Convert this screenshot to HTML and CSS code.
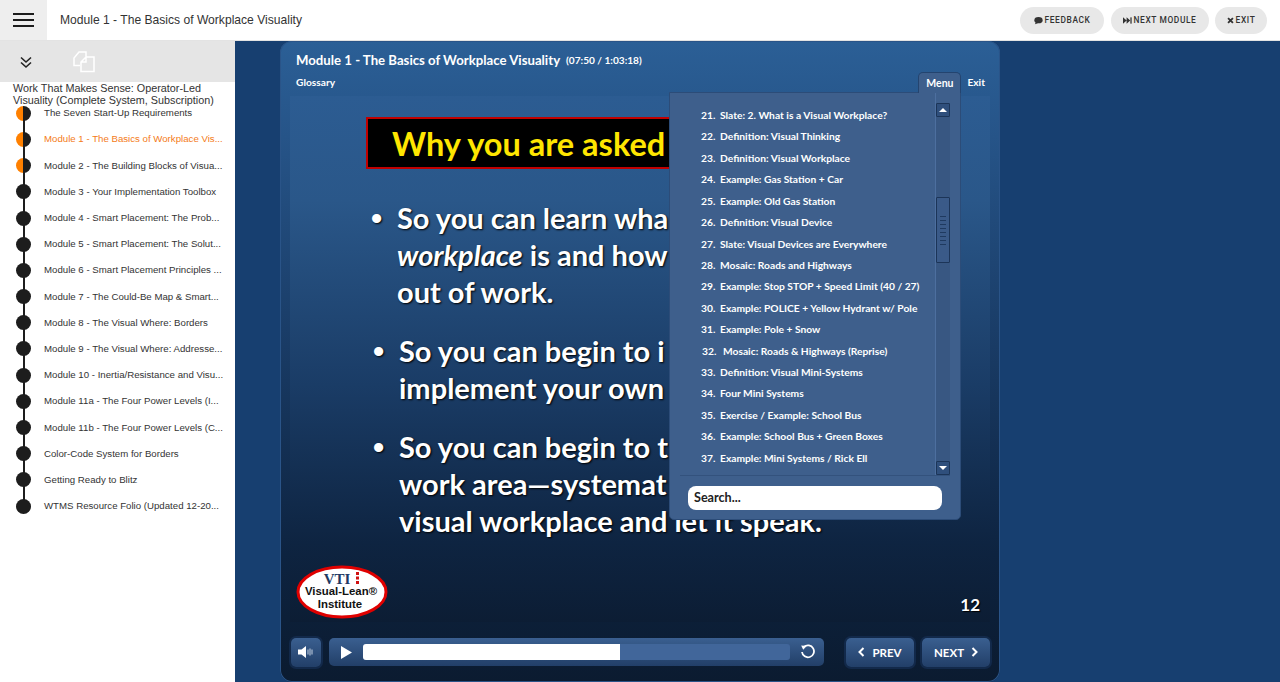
FILE: index.html
```html
<!DOCTYPE html>
<html lang="en">
<head>
<meta charset="utf-8">
<title>Module 1 - The Basics of Workplace Visuality</title>
<link rel="stylesheet" href="styles.css">
</head>
<body>
<header class="topbar">
  <button class="burger" aria-label="Menu"><span></span><span></span><span></span></button>
  <div class="page-title">Module 1 - The Basics of Workplace Visuality</div>
  <div class="top-actions">
    <a class="pill p-feedback"><svg class="pill-icon" viewBox="0 0 10 10"><ellipse cx="5" cy="4.600" rx="4.600" ry="3.500"/><path d="M2 7l-1 2.200L4.200 8z"/></svg>FEEDBACK</a>
    <a class="pill p-next"><svg class="pill-icon" viewBox="0 0 10 10"><path d="M0 1.500l4 3.500-4 3.500zM4 1.500l4 3.500-4 3.500z"/><rect x="8.200" y="1.500" width="1.400" height="7"/></svg>NEXT MODULE</a>
    <a class="pill p-exit"><svg class="pill-icon small" viewBox="0 0 10 10"><path d="M1.500 1.500l7 7M8.500 1.500l-7 7" stroke="#333" stroke-width="2.600" fill="none"/></svg>EXIT</a>
  </div>
</header>
<div class="shell">
  <aside class="sidebar">
    <div class="side-tools">
      <svg class="chev" viewBox="0 0 14 14"><path d="M2 2.500l5 4.500 5-4.500M2 7.500l5 4.500 5-4.500" fill="none" stroke="#222" stroke-width="1.600"/></svg>
      <svg class="copy" viewBox="0 0 22 22"><path d="M7 14.500H1V7l5-6h7v5M8 20.500V11l5-5h8v14.500zM13 6v5H8" fill="none" stroke="#fff" stroke-width="1.500"/></svg>
    </div>
    <h2 class="course">Work That Makes Sense: Operator-Led Visuality (Complete System, Subscription)</h2>
    <ol class="steps">
      <li class="step half">The Seven Start-Up Requirements</li>
      <li class="step half current">Module 1 - The Basics of Workplace Vis...</li>
      <li class="step half">Module 2 - The Building Blocks of Visua...</li>
      <li class="step">Module 3 - Your Implementation Toolbox</li>
      <li class="step">Module 4 - Smart Placement: The Prob...</li>
      <li class="step">Module 5 - Smart Placement: The Solut...</li>
      <li class="step">Module 6 - Smart Placement Principles ...</li>
      <li class="step">Module 7 - The Could-Be Map &amp; Smart...</li>
      <li class="step">Module 8 - The Visual Where: Borders</li>
      <li class="step">Module 9 - The Visual Where: Addresse...</li>
      <li class="step">Module 10 - Inertia/Resistance and Visu...</li>
      <li class="step">Module 11a - The Four Power Levels (I...</li>
      <li class="step">Module 11b - The Four Power Levels (C...</li>
      <li class="step">Color-Code System for Borders</li>
      <li class="step">Getting Ready to Blitz</li>
      <li class="step">WTMS Resource Folio (Updated 12-20...</li>
    </ol>
  </aside>
  <main class="stage">
    <section class="player">
      <div class="player-head">
        <span class="player-title">Module 1 - The Basics of Workplace Visuality</span>
        <span class="player-time">(07:50 / 1:03:18)</span>
      </div>
      <nav class="player-nav">
        <a class="nav-link">Glossary</a>
        <div class="nav-right">
          <a class="tab">Menu</a>
          <a class="nav-link">Exit</a>
        </div>
      </nav>
      <div class="slide">
        <div class="slide-title">Why you are asked</div>
        <ul class="bullets">
          <li>So you can learn wha<br><em>workplace</em> is and how<br>out of work.</li>
          <li class="b2">So you can begin to i<br>implement your own</li>
          <li class="b3">So you can begin to t<br>work area—systemat<br>visual workplace and let it speak.</li>
        </ul>
        <div class="slide-foot">
          <svg class="logo" viewBox="0 0 92 54">
            <ellipse cx="46" cy="27" rx="44" ry="25" fill="#fff" stroke="#e00000" stroke-width="3"/>
            <text x="41" y="19" class="logo-vti">VTI</text>
            <rect x="60" y="7" width="3" height="3" fill="#d01010"/>
            <rect x="60" y="11.500" width="3" height="3" fill="#d01010"/>
            <rect x="60" y="16" width="3" height="3" fill="#d01010"/>
            <text x="45" y="30" class="logo-t">Visual-Lean®</text>
            <text x="44" y="43" class="logo-t">Institute</text>
          </svg>
          <span class="slide-no">12</span>
        </div>
      </div>
      <div class="controls">
        <button class="ctl vol" aria-label="Volume">
          <svg viewBox="0 0 16 14" width="16" height="14"><path d="M0 4.500h3.500L8 1v12L3.500 9.500H0z" fill="#fff"/><path d="M10 4.500v5M12 3.500v7M14 4.500v5" stroke="#c4d0e0" stroke-width="1"/></svg>
        </button>
        <div class="seek">
          <svg class="play" viewBox="0 0 11 13"><path d="M0 0l11 6.500L0 13z" fill="#fff"/></svg>
          <div class="track"><div class="fill" style="width:60.200%"></div></div>
          <svg class="replay" viewBox="0 0 16 16"><path d="M4 2.800A6 6 0 1 1 2 8" fill="none" stroke="#fff" stroke-width="1.800"/><path d="M1.200 1.500l5.500.6-3.500 3.600z" fill="#fff"/></svg>
        </div>
        <button class="ctl pager prev"><svg viewBox="0 0 7 10" class="arrow"><path d="M5.500 1L1.500 5l4 4" fill="none" stroke="#fff" stroke-width="2"/></svg>PREV</button>
        <button class="ctl pager next">NEXT<svg viewBox="0 0 7 10" class="arrow"><path d="M1.500 1l4 4-4 4" fill="none" stroke="#fff" stroke-width="2"/></svg></button>
      </div>
      <div class="menu">
        <div class="menu-body">
          <ol class="menu-list">
            <li><span>21.</span>Slate: 2. What is a Visual Workplace?</li>
            <li><span>22.</span>Definition: Visual Thinking</li>
            <li><span>23.</span>Definition: Visual Workplace</li>
            <li><span>24.</span>Example: Gas Station + Car</li>
            <li><span>25.</span>Example: Old Gas Station</li>
            <li><span>26.</span>Definition: Visual Device</li>
            <li><span>27.</span>Slate: Visual Devices are Everywhere</li>
            <li><span>28.</span>Mosaic: Roads and Highways</li>
            <li><span>29.</span>Example: Stop STOP + Speed Limit (40 / 27)</li>
            <li><span>30.</span>Example: POLICE + Yellow Hydrant w/ Pole</li>
            <li><span>31.</span>Example: Pole + Snow</li>
            <li class="odd"><span>32.</span>Mosaic: Roads &amp; Highways (Reprise)</li>
            <li><span>33.</span>Definition: Visual Mini-Systems</li>
            <li><span>34.</span>Four Mini Systems</li>
            <li><span>35.</span>Exercise / Example: School Bus</li>
            <li><span>36.</span>Example: School Bus + Green Boxes</li>
            <li><span>37.</span>Example: Mini Systems / Rick Ell</li>
          </ol>
          <div class="scroll">
            <div class="sb-btn"><i class="up"></i></div>
            <div class="thumb"><b></b><b></b><b></b><b></b><b></b><b></b><b></b><b></b></div>
            <div class="sb-btn low"><i class="down"></i></div>
          </div>
        </div>
        <div class="search">Search...</div>
      </div>
    </section>
  </main>
</div>
</body>
</html>
```
FILE: styles.css
```css
* { box-sizing: border-box; }
html, body { margin: 0; height: 100%; overflow: hidden; }
body { font-family: "Liberation Sans", Arial, sans-serif; background: #fff; color: #333; }
button { border: 0; padding: 0; font: inherit; }

.topbar { height: 41px; display: flex; align-items: center; border-bottom: 1px solid #e3e3e3; background: #fff; }
.burger { width: 47px; height: 40px; background: #eeeeee; display: flex; flex-direction: column; justify-content: center; align-items: center; gap: 4px; }
.burger span { width: 21px; height: 2px; background: #1c1c1c; }
.page-title { margin-left: 13px; font-size: 12.100px; color: #333; flex: 1; }
.top-actions { display: flex; gap: 6.500px; padding-right: 13px; }
.pill { height: 27px; border-radius: 14px; background: #e8e8e8; display: flex; align-items: center; justify-content: center; font: 500 8.400px Roboto, sans-serif; letter-spacing: 0.600px; color: #333; }
.p-feedback { width: 84px; }
.p-next { width: 98px; }
.p-exit { width: 52px; }
.pill-icon { width: 9px; height: 9px; margin-right: 2px; fill: #333; }
.pill-icon.small { width: 7px; height: 7px; }

.shell { display: flex; height: 641px; }
.sidebar { width: 235px; background: #fff; flex: none; }
.side-tools { height: 41px; background: #e5e5e5; display: flex; align-items: center; padding-left: 19px; gap: 40px; }
.chev { width: 14px; height: 14px; }
.copy { width: 22px; height: 22px; }
.course { margin: 0; height: 18.300px; padding: 1px 13px 0; font-weight: 400; font-size: 10.800px; line-height: 11.500px; color: #333; }
.steps { list-style: none; margin: 0; padding: 0; }
.step { height: 26.200px; line-height: 26.200px; padding-left: 44px; font-size: 9.660px; white-space: nowrap; color: #333; position: relative; }
.step::before { content: ""; position: absolute; left: 16px; top: 5.500px; width: 15px; height: 15px; border-radius: 50%; background: #1d1d1d; z-index: 1; }
.half::before { background: linear-gradient(90deg, #ff8000 50%, #1d1d1d 50%); }
.step::after { content: ""; position: absolute; left: 22.500px; top: 0; width: 2px; height: 100%; background: #1d1d1d; }
.step:first-child::after { top: 50%; height: 50%; }
.step:last-child::after { height: 50%; }
.current { color: #f47b20; }

.stage { flex: 1; background: #173f70; padding-left: 45px; }
.player { width: 720px; height: 641px; position: relative; display: flex; flex-direction: column; border-radius: 12px; box-shadow: inset 0 0 0 1px #2a5488; background: linear-gradient(#2b5f96 0, #265488 15%, #1a3d68 45%, #0d2340 80%, #0b1b30 100%); padding: 0 10px; }
.player-head { height: 31px; padding: 7px 6px 0; display: flex; align-items: center; gap: 6px; color: #fff; font-family: Lato, sans-serif; flex: none; }
.player-title { font-weight: 700; font-size: 13.200px; }
.player-time { font-weight: 700; font-size: 10.100px; }
.player-nav { height: 19px; flex: none; display: flex; justify-content: space-between; align-items: center; padding: 0 5px 0 6px; }
.nav-link { font: 700 10.200px Lato, sans-serif; color: #fff; }
.nav-right { display: flex; align-items: center; gap: 6px; height: 19px; }
.tab { align-self: flex-start; width: 43px; height: 21px; background: #3e5f8c; border-radius: 5px 5px 0 0; color: #fff; font: 700 10.500px/20px Lato, sans-serif; text-align: center; border: 1px solid #24446f; border-bottom: 0; position: relative; z-index: 3; }

.slide { height: 526px; margin-top: 5px; flex: none; background: linear-gradient(#2c5c92 0, #2a5789 20%, #1a3c66 55%, #0e2441 85%, #0c1d34 100%); padding: 21px 0 0 76px; color: #fff; position: relative; }
.slide-title { width: 560px; height: 52px; background: #000; border: 2px solid #c00000; border-right: 0; padding-left: 24px; color: #ffe600; font: 700 32.500px/50px Lato, sans-serif; }
.bullets { list-style: none; margin: 30px 0 0; padding: 0 0 0 31px; font: 700 29px/37.200px Lato, sans-serif; white-space: nowrap; text-shadow: 1px 1px 2px #000; }
.bullets li { position: relative; margin-bottom: 21px; }
.bullets li::before { content: "•"; position: absolute; left: -26px; top: 1px; font: 700 32px/37.200px "Liberation Sans", sans-serif; }
.bullets .b2 { margin-left: 2px; margin-bottom: 22px; }
.bullets .b3 { margin-left: 2px; margin-bottom: 0; }
.slide-foot { position: absolute; left: 6px; right: 10px; bottom: 0; height: 60px; display: flex; justify-content: space-between; align-items: flex-end; padding-bottom: 3px; }
.logo { width: 92px; height: 54px; }
.logo-vti { font: 700 15px "Liberation Serif", serif; fill: #1f3a63; text-anchor: middle; }
.logo-t { font: 700 11.400px "Liberation Sans", sans-serif; fill: #111; text-anchor: middle; }
.slide-no { font: 700 17px Lato, sans-serif; text-shadow: 1px 1px 1px #000; margin-bottom: 4px; }

.controls { flex: 1; display: flex; align-items: center; padding: 0 0 0 1px; gap: 8px; }
.ctl { flex: none; background: linear-gradient(#3a5f90, #223f68); border-radius: 5px; color: #fff; display: flex; align-items: center; justify-content: center; box-shadow: 0 0 0 2px #12294a; height: 29px; }
.vol { width: 30px; }
.seek { flex: none; width: 495px; height: 28px; border-radius: 5px; background: linear-gradient(#3a5f90, #223f68); display: flex; align-items: center; padding-left: 12px; margin-right: 14px; }
.play { width: 11px; height: 13px; }
.track { width: 427px; height: 16px; margin-left: 11px; border-radius: 3px; background: #41669a; overflow: hidden; }
.fill { height: 100%; background: #fff; }
.replay { width: 16px; height: 16px; margin-left: 10px; }
.pager { width: 68px; font: 700 11.500px Lato, sans-serif; gap: 7px; }
.arrow { width: 7px; height: 10px; }

.menu { position: absolute; left: 389px; top: 51px; width: 292px; height: 428px; background: #3e5f8c; border: 1px solid #2c4c78; border-radius: 0 0 5px 5px; z-index: 2; color: #fff; font: 700 10.250px Lato, sans-serif; }
.menu-body { height: 383px; margin: 0 10px; display: flex; border-bottom: 1px solid #33527d; }
.menu-list { list-style: none; margin: 0; padding: 12px 0 0 21px; width: 256px; flex: none; border-right: 1px solid #4d6f9f; }
.menu-list li { height: 21.430px; line-height: 21.430px; white-space: nowrap; }
.menu-list span { display: inline-block; width: 19px; }
.menu-list .odd { padding-left: 1px; }
.menu-list .odd span { width: 21px; }
.scroll { width: 14px; margin-top: 10px; height: 372px; display: flex; flex-direction: column; background: #385782; }
.sb-btn { flex: none; width: 14px; height: 14px; background: #2f4f7c; border: 1px solid #1c3558; display: flex; align-items: center; justify-content: center; border-radius: 1px; }
.sb-btn.low { margin-top: auto; }
.sb-btn i { width: 0; height: 0; border-left: 4px solid transparent; border-right: 4px solid transparent; }
.sb-btn .up { border-bottom: 4px solid #fff; }
.sb-btn .down { border-top: 4px solid #fff; }
.thumb { flex: none; width: 14px; height: 66px; margin-top: 80px; background: #3a5a88; border: 1px solid #1c3558; border-radius: 1px; display: flex; flex-direction: column; justify-content: center; gap: 3px; padding: 0 3px; }
.thumb b { height: 1px; background: #1f3a60; }
.search { margin: 10px 0 0 18px; width: 254px; height: 24px; background: #fff; border-radius: 8px; color: #222; font: 700 12.600px/24px Lato, sans-serif; padding-left: 6px; }
```
